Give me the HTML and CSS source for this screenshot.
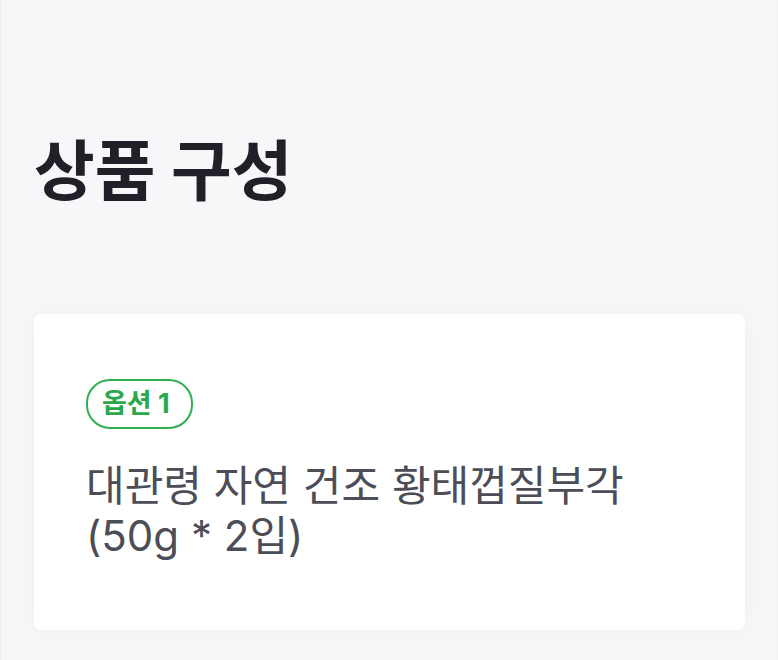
FILE: index.html
```html
<!DOCTYPE html>
<html lang="ko">
<head>
    <meta charset="UTF-8">
    <meta name="viewport" content="width=device-width, initial-scale=1.0">
    <title>상품 구성</title>
    <link rel="stylesheet" href="styles.css">
</head>
<body>
    <div class="page">
        <h1 class="section-title">상품 구성</h1>

        <div class="option-card">
            <span class="option-badge">옵션 1</span>
            <p class="option-name">대관령 자연 건조 황태껍질부각<br>(50g * 2입)</p>
        </div>
    </div>
</body>
</html>
```

FILE: styles.css
```css
html, body {
    margin: 0;
    padding: 0;
}
body {
    font-family: Inter, "Noto Sans CJK KR", sans-serif;
    background-color: #f7f7f9;
    color: #4d4d57;
}
.page {
    min-height: 660px;
    box-sizing: border-box;
    padding: 133px 32px 0 33px;
    border-left: 1px solid #ececef;
    border-right: 1px solid #f0f0f2;
}
.section-title {
    font-size: 66px;
    font-weight: 700;
    line-height: 77px;
    color: #202028;
    margin: 0;
}
.option-card {
    margin-top: 104px;
    background-color: #fff;
    border-radius: 7px;
    padding: 65px 52px 69px;
    box-shadow: 0 0 24px rgba(0,0,0,0.035);
}
.option-badge {
    display: inline-block;
    font-size: 27px;
    font-weight: 700;
    line-height: 30px;
    color: #2aa84a;
    border: 2px solid #2fb050;
    border-radius: 24px;
    padding: 8px 21px 8px 14px;
}
.option-name {
    margin: 32px 0 0 0;
    font-size: 42px;
    line-height: 50px;
    color: #4d4d57;
}
```
